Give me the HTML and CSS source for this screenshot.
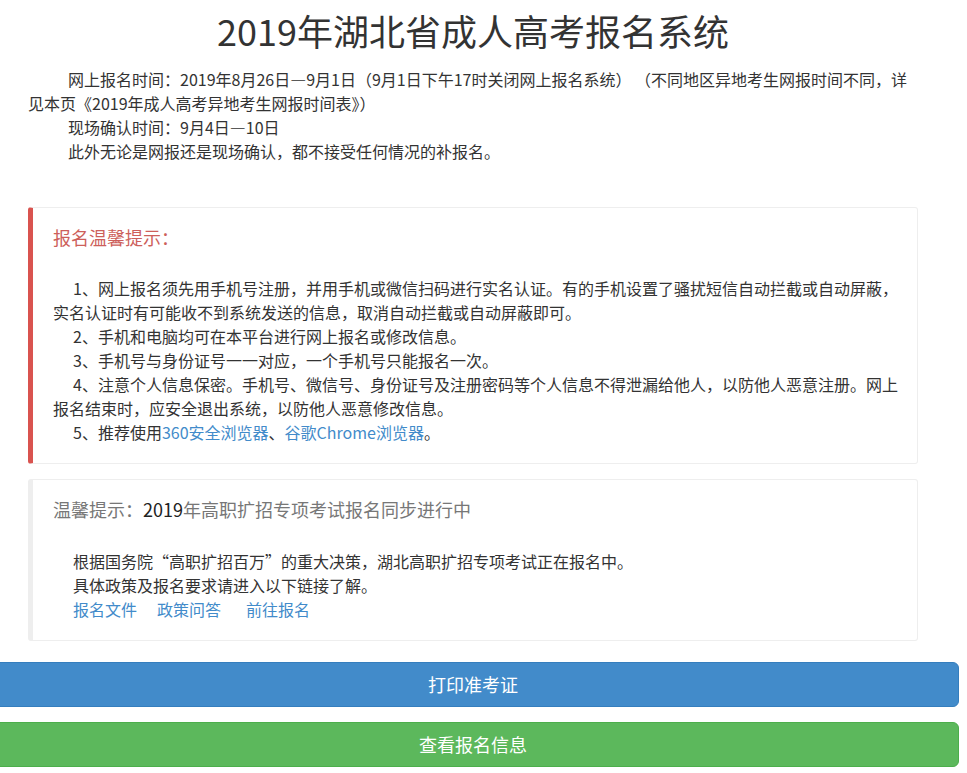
FILE: index.html
```html
<!DOCTYPE html>
<html lang="zh-CN">
<head>
  <meta charset="UTF-8">
  <meta name="viewport" content="width=device-width, initial-scale=1.0">
  <title>2019年湖北省成人高考报名系统</title>
  <link rel="stylesheet" href="styles.css">
</head>
<body>
  <div class="container">
    <h1 class="page-title">2019年湖北省成人高考报名系统</h1>

    <div class="intro">
      <p>网上报名时间：2019年8月26日—9月1日（9月1日下午17时关闭网上报名系统） （不同地区异地考生网报时间不同，详见本页《2019年成人高考异地考生网报时间表》）</p>
      <p>现场确认时间：9月4日—10日</p>
      <p>此外无论是网报还是现场确认，都不接受任何情况的补报名。</p>
    </div>

    <div class="callout callout-danger">
      <h4 class="callout-title">报名温馨提示：</h4>
      <div class="callout-body">
        <p>1、网上报名须先用手机号注册，并用手机或微信扫码进行实名认证。有的手机设置了骚扰短信自动拦截或自动屏蔽，实名认证时有可能收不到系统发送的信息，取消自动拦截或自动屏蔽即可。</p>
        <p>2、手机和电脑均可在本平台进行网上报名或修改信息。</p>
        <p>3、手机号与身份证号一一对应，一个手机号只能报名一次。</p>
        <p>4、注意个人信息保密。手机号、微信号、身份证号及注册密码等个人信息不得泄漏给他人，以防他人恶意注册。网上报名结束时，应安全退出系统，以防他人恶意修改信息。</p>
        <p>5、推荐使用<a href="#">360安全浏览器</a>、<a href="#">谷歌Chrome浏览器</a>。</p>
      </div>
    </div>

    <div class="callout callout-default">
      <h4 class="callout-title">温馨提示：<span class="year">2019</span>年高职扩招专项考试报名同步进行中</h4>
      <div class="callout-body padded">
        <p>根据国务院“高职扩招百万”的重大决策，湖北高职扩招专项考试正在报名中。</p>
        <p>具体政策及报名要求请进入以下链接了解。</p>
        <p class="links"><a href="#">报名文件</a><a href="#">政策问答</a><a href="#">前往报名</a></p>
      </div>
    </div>

    <a href="#" class="btn btn-primary">打印准考证</a>
    <a href="#" class="btn btn-success">查看报名信息</a>
  </div>
</body>
</html>
```

FILE: styles.css
```css
body {
  margin: 0;
  font-family: "Noto Sans CJK SC", "Liberation Sans", sans-serif;
  font-size: 16px;
  line-height: 24px;
  color: #333;
  background: #fff;
}
p {
  margin: 0;
}
a {
  color: #428bca;
  text-decoration: none;
}
.container {
  width: 890px;
  margin-left: 28px;
}
.page-title {
  margin: 10px 0 17px;
  font-size: 36px;
  font-weight: normal;
  line-height: 40px;
  text-align: center;
  color: #333;
}
.intro p {
  text-indent: 40px;
}
.intro {
  margin-bottom: 44px;
}
.callout {
  border: 1px solid #eee;
  border-left: 5px solid #eee;
  border-radius: 3px;
  padding: 19px 10px 19px 20px;
  margin-bottom: 15px;
}
.callout-danger {
  border-left-color: #d9534f;
}
.callout-title {
  margin: 0 0 29px;
  font-size: 18px;
  font-weight: normal;
  line-height: 20px;
  color: #777;
}
.callout-danger .callout-title {
  color: #cd5f5b;
}
.callout-default .callout-title {
  margin-bottom: 30px;
}
.year {
  color: #222;
}
.callout-danger .callout-body p {
  text-indent: 20px;
}
.callout-body.padded {
  padding-left: 20px;
}
.links a {
  margin-right: 20px;
}
.links a + a {
  margin-right: 25px;
}
.btn {
  display: block;
  margin: 0 -41px 15px;
  padding: 10px 16px;
  font-size: 18px;
  line-height: 23px;
  text-align: center;
  color: #fff;
  border: 1px solid transparent;
  border-radius: 6px;
}
.btn-primary {
  margin-top: 21px;
  background-color: #428bca;
  border-color: #357ebd;
}
.btn-success {
  background-color: #5cb85c;
  border-color: #4cae4c;
}
```
